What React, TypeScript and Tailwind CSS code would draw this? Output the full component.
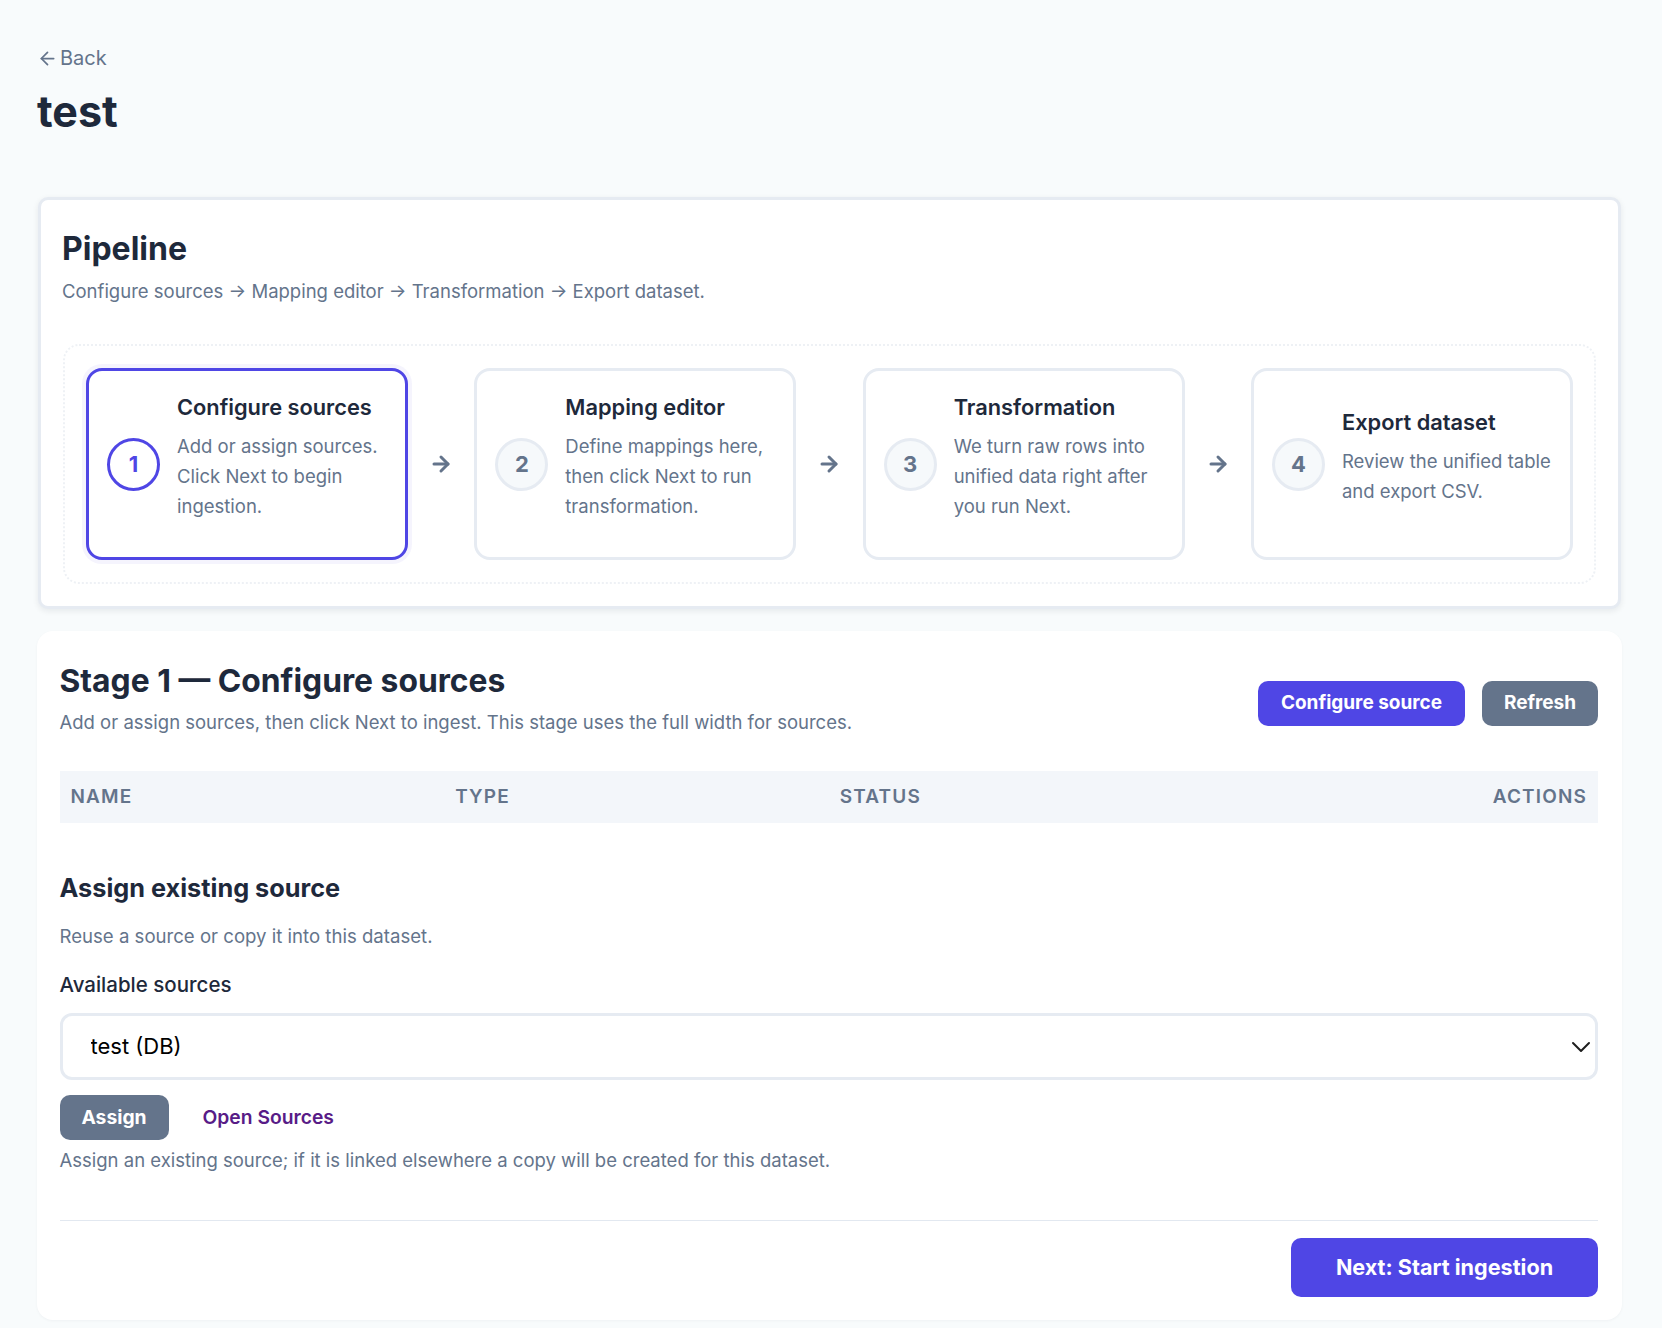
import React from "react";
import { ArrowLeft, ArrowRight, ChevronDown } from "lucide-react";

const font = { fontFamily: "Inter, sans-serif" };

const steps = [
  { n: "1", title: "Configure sources", lines: ["Add or assign sources.", "Click Next to begin", "ingestion."], active: true },
  { n: "2", title: "Mapping editor", lines: ["Define mappings here,", "then click Next to run", "transformation."] },
  { n: "3", title: "Transformation", lines: ["We turn raw rows into", "unified data right after", "you run Next."] },
  { n: "4", title: "Export dataset", lines: ["Review the unified table", "and export CSV."] },
];

function Step({ s }: { s: (typeof steps)[number] }) {
  return (
    <div
      className={
        "flex h-[192px] w-[322px] items-center gap-[17px] rounded-[16px] border-[3px] bg-white pl-[18px] pr-[14px] " +
        (s.active ? "border-[#4f46e5] shadow-[0_0_0_4px_rgba(79,70,229,0.06)]" : "border-[#e6ebf2]")
      }
    >
      <div
        className={
          "flex h-[53px] w-[53px] shrink-0 items-center justify-center rounded-full border-[3px] text-[22px] font-bold " +
          (s.active ? "border-[#4f46e5] bg-white text-[#4f46e5]" : "border-[#e6ebf2] bg-[#f6f9fb] text-[#64748b]")
        }
      >
        {s.n}
      </div>
      <div className="min-w-0 pb-[16px]">
        <div className="mb-[9px] whitespace-nowrap text-[21.8px] leading-[30px] font-semibold text-[#1e293b]">{s.title}</div>
        {s.lines.map((l) => (
          <div key={l} className="whitespace-nowrap text-[18.5px] leading-[30px] text-[#64748b]">
            {l}
          </div>
        ))}
      </div>
    </div>
  );
}

export default function App() {
  return (
    <div style={font} className="h-[1328px] overflow-hidden bg-[#f8fbfc] pr-[40px] pl-[37px] pt-[44px]">
      <a className="flex h-[28px] items-center gap-[2px] text-[20px] text-[#64748b]">
        <ArrowLeft className="h-[21px] w-[21px]" strokeWidth={2} />
        Back
      </a>
      <h1 className="mt-[14px] text-[43px] leading-[50px] font-bold text-[#1e293b]">test</h1>

      <section className="mr-[1px] ml-[1px] mt-[61px] h-[412px] rounded-[10px] border-[3px] border-[#e6ebf2] bg-white px-[21px] pt-[27px] shadow-[0_2px_6px_rgba(15,23,42,0.08)]">
        <h2 className="text-[32px] leading-[44px] font-bold text-[#1e293b]">Pipeline</h2>
        <p className="mt-[6px] text-[18.5px] leading-[28px] text-[#64748b]">
          Configure sources → Mapping editor → Transformation → Export dataset.
        </p>
        <div className="mx-[1px] mt-[39px] flex h-[240px] items-center justify-between rounded-[16px] border-2 border-dotted border-[#eef1f5] px-[21px]">
          {steps.map((s, i) => (
            <React.Fragment key={s.n}>
              <Step s={s} />
              {i < 3 && <ArrowRight className="h-[24px] w-[24px] text-[#64748b]" strokeWidth={3} />}
            </React.Fragment>
          ))}
        </div>
      </section>

      <section className="mt-[22px] h-[689px] rounded-[16px] bg-white pr-[24px] pl-[22.5px] pt-[27px] shadow-[0_1px_3px_rgba(15,23,42,0.04)]">
        <div className="flex items-start justify-between">
          <div>
            <h2 className="text-[31.8px] leading-[46px] font-bold text-[#1e293b]">Stage 1 — Configure sources</h2>
            <p className="mt-[4px] text-[18.5px] leading-[28px] text-[#64748b]">
              Add or assign sources, then click Next to ingest. This stage uses the full width for sources.
            </p>
          </div>
          <div className="mt-[23px] flex gap-[17px]">
            <button className="h-[45px] w-[207px] rounded-[10px] bg-[#4f46e5] text-[19px] font-bold text-white">Configure source</button>
            <button className="h-[45px] w-[116px] rounded-[10px] bg-[#64748b] text-[19px] font-bold text-white">Refresh</button>
          </div>
        </div>

        <div className="mt-[35px] grid h-[52px] grid-cols-4 items-center bg-[#f3f6fa] text-[19px] font-semibold tracking-[0.06em] text-[#64748b]">
          <div className="px-[11px]">NAME</div>
          <div className="px-[11px]">TYPE</div>
          <div className="px-[11px]">STATUS</div>
          <div className="px-[11px] text-right">ACTIONS</div>
        </div>

        <h3 className="mt-[48px] text-[25.3px] leading-[34px] font-bold text-[#1e293b]">Assign existing source</h3>
        <p className="mt-[17px] text-[18.6px] leading-[28px] text-[#64748b]">Reuse a source or copy it into this dataset.</p>
        <label className="mt-[21px] block text-[20.5px] leading-[28px] font-medium text-[#1e293b]">Available sources</label>
        <div className="relative mt-[14px]">
          <select className="block h-[67px] w-full appearance-none rounded-[12px] border-[3px] border-[#e6ebf2] bg-white px-[28px] text-[22px] text-black">
            <option>test (DB)</option>
          </select>
          <ChevronDown className="absolute top-[18px] right-[1px] h-[32px] w-[32px] text-[#1e1e1e]" strokeWidth={1.5} />
        </div>
        <div className="mt-[15px] flex items-center gap-[34px]">
          <button className="h-[45px] w-[109px] rounded-[10px] bg-[#64748b] text-[19.3px] font-bold text-white">Assign</button>
          <a className="text-[19.3px] font-semibold text-[#581c87]">Open Sources</a>
        </div>
        <p className="mt-[6px] text-[18.5px] leading-[28px] text-[#64748b]">
          Assign an existing source; if it is linked elsewhere a copy will be created for this dataset.
        </p>
        <div className="mt-[46px] border-t border-[#e2e8f0] pt-[17px]">
          <div className="flex justify-end">
            <button className="h-[59px] w-[307px] rounded-[10px] bg-[#4f46e5] text-[21.6px] font-bold text-white">Next: Start ingestion</button>
          </div>
        </div>
      </section>
    </div>
  );
}
